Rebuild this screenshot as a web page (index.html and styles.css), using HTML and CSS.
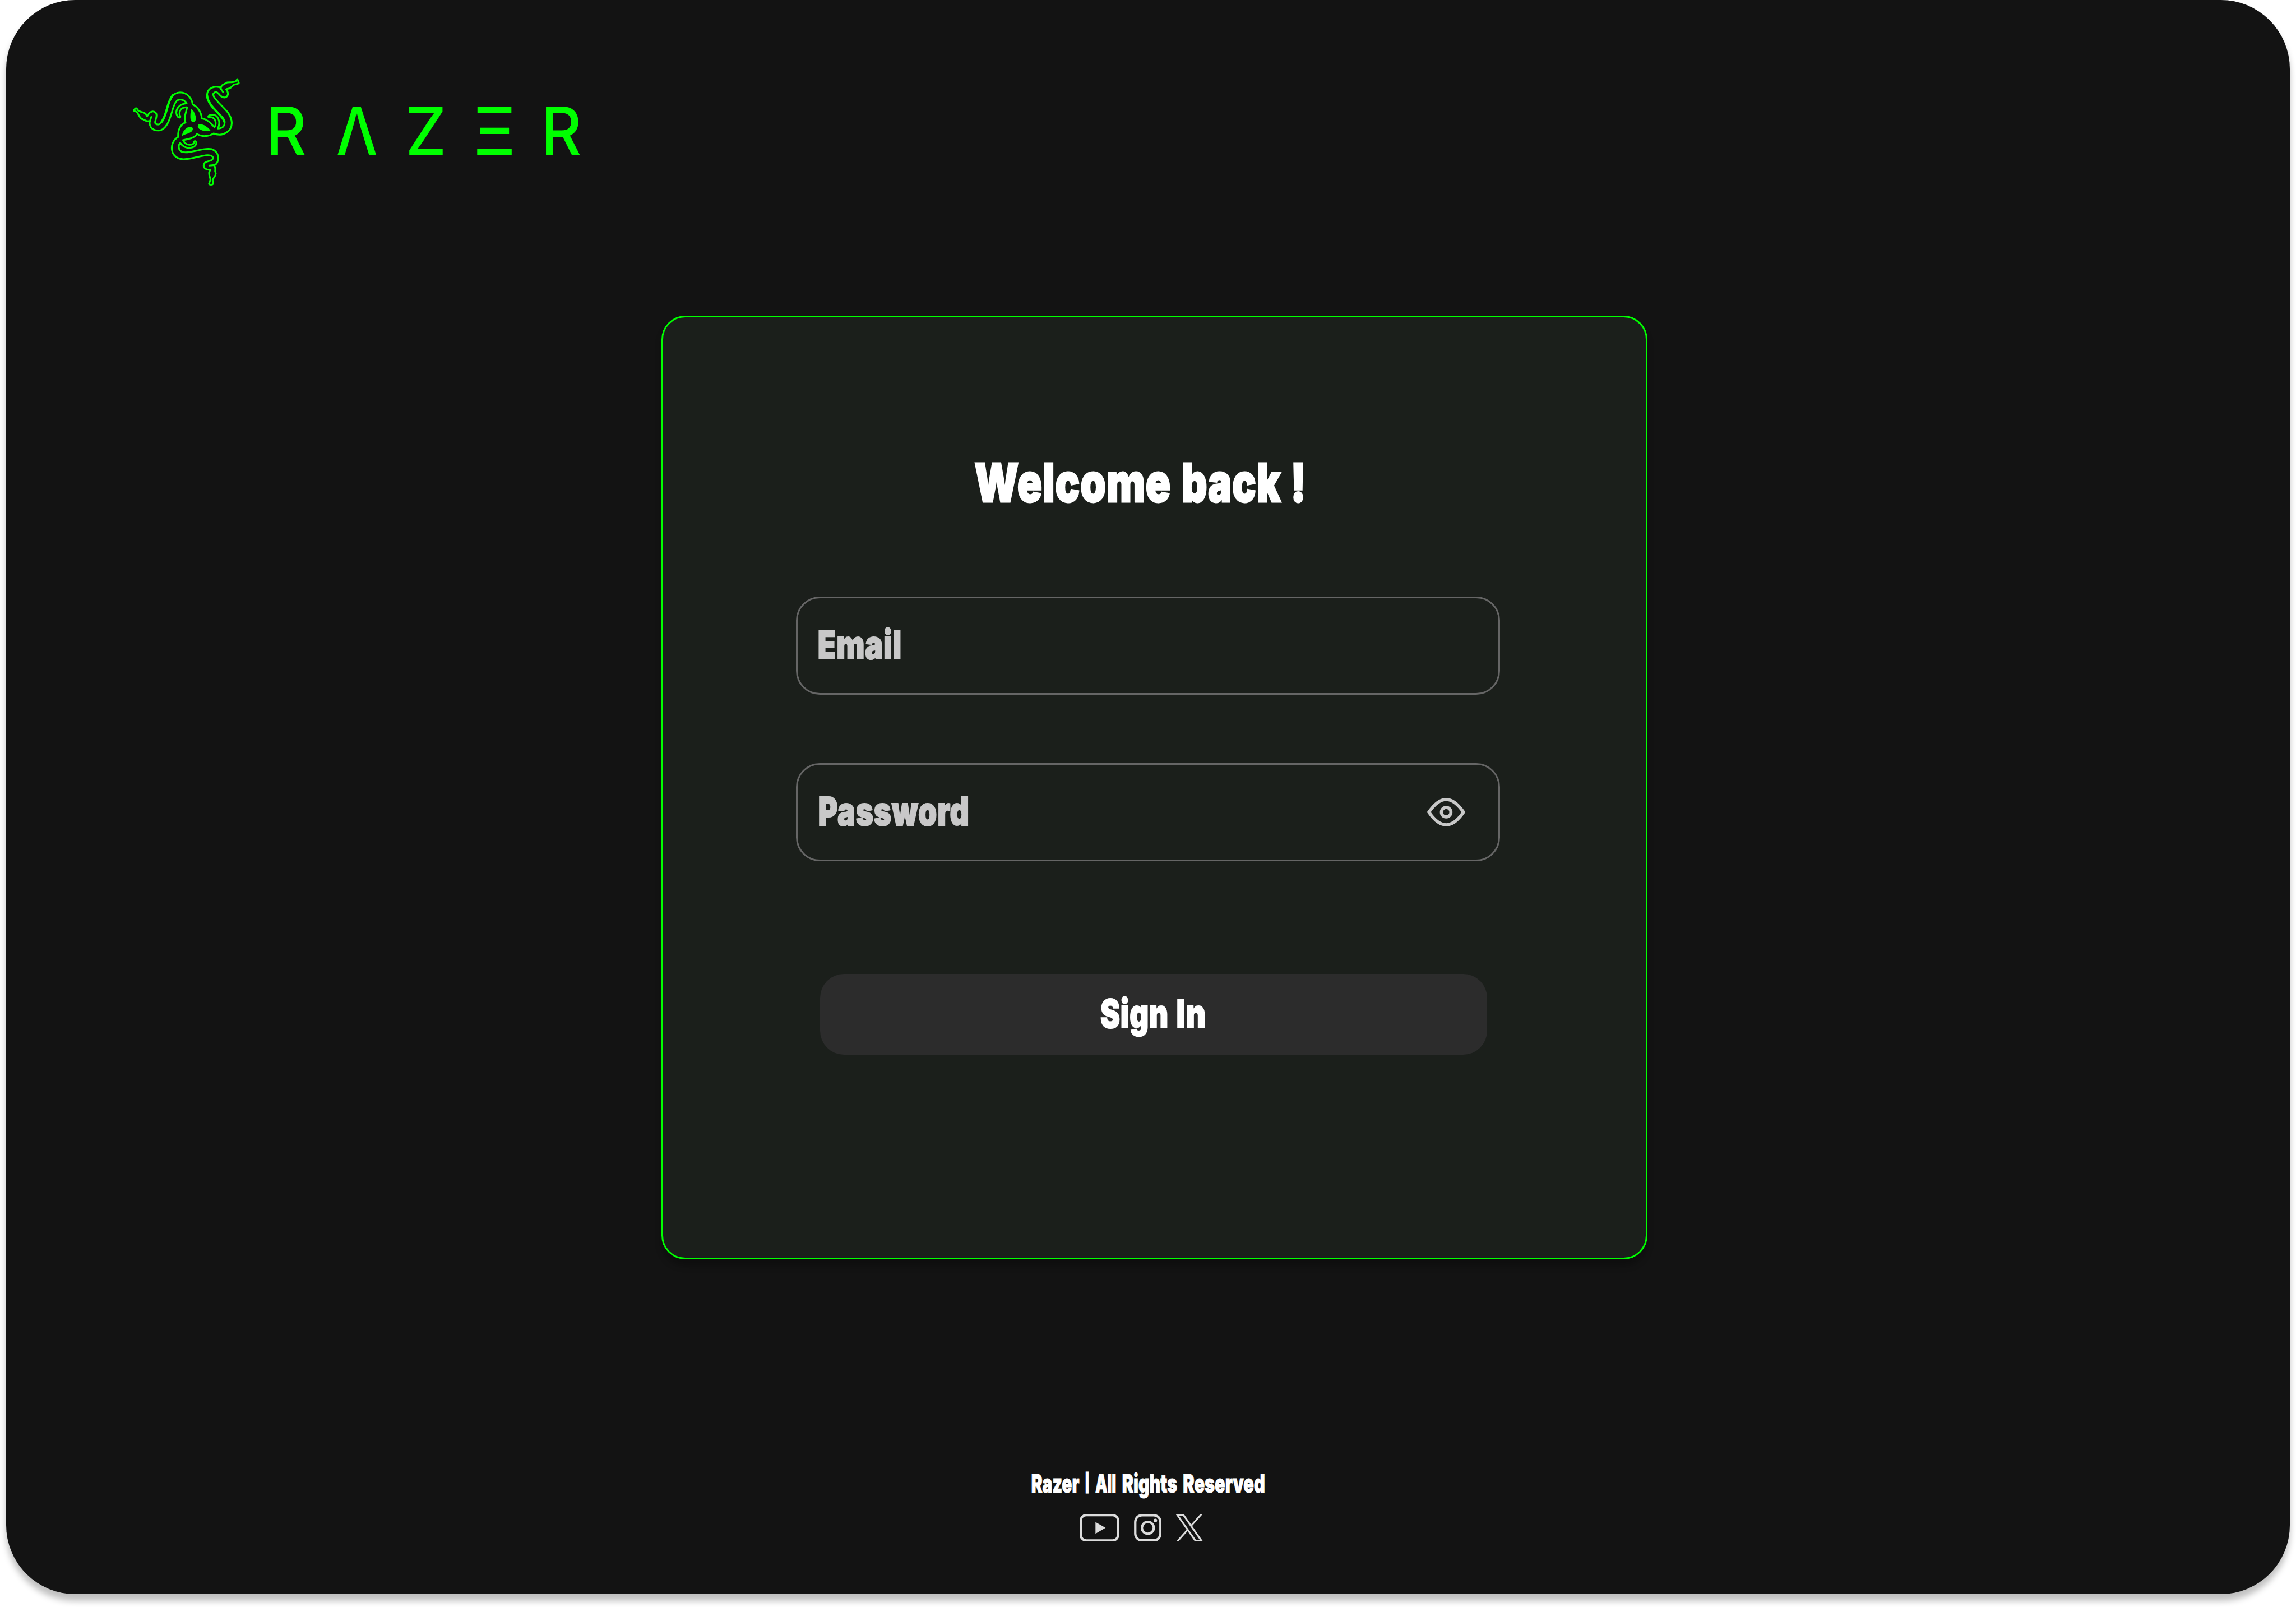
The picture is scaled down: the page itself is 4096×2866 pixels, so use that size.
FILE: index.html
```html
<!DOCTYPE html>
<html lang="en">
<head>
<meta charset="utf-8">
<title>Razer | Sign In</title>
<link rel="stylesheet" href="styles.css">
</head>
<body>
<main class="window">
  <header class="brand">
    <svg class="snakes" viewBox="0 0 960 930" aria-hidden="true">
      <g class="snake-line">
        <path d="M216 346L211 362C190 405 215 449 268 449C345 449 366 318 386 265C400 222 420 213 436 214C455 215 472 226 483 243C425 247 399 290 407 325C412 345 424 353 432 351C441 345 433 338 430 328C426 290 452 271 486 273C484 305 458 345 475 388C437 400 416 445 419 498C345 540 355 664 460 666C530 666 590 637 640 635C670 634 686 645 682 660C675 690 615 670 612 712C612 735 632 748 663 746L654 764C650 790 664 805 663 822L653 852C655 861 680 861 682 852L680 822C690 800 703 795 704 773L699 756C702 735 700 720 690 712C740 695 735 590 655 588C600 584 530 614 475 614C422 614 414 572 434 541C462 582 500 584 525 577C550 570 558 553 555 537C550 525 540 527 540 538C537 550 522 557 505 557C485 556 467 545 456 521C500 513 540 508 562 475C600 497 650 496 687 471C755 500 825 455 825 392C823 305 735 265 690 193C675 162 705 145 727 172C745 195 765 205 783 195C805 178 795 150 782 137C790 129 800 136 815 126L840 103L868 95C882 92 880 88 874 82C877 62 862 58 857 74C840 90 815 80 790 85C770 100 745 100 742 126C700 105 638 125 638 182C642 270 765 335 770 385C774 415 753 433 719 434C744 385 722 325 674 329C650 330 642 345 650 348C698 340 715 390 694 424C665 395 640 362 598 357C596 312 567 269 529 252C524 203 485 160 435 160C365 162 350 235 333 290C318 345 290 404 266 404C215 400 275 345 250 315C235 298 210 303 197 322C192 333 188 340 184 340L177 328C170 316 160 312 145 310L120 300C110 295 110 278 99 279C92 279 94 287 86 293C81 299 88 304 98 304L111 314C120 328 125 350 145 362C160 363 170 377 190 379L208 376"/>
        <path d="M741 123L743 135L759 157"/>
        <path d="M694 710L655 714"/>
        <path class="thick" d="M380 180C350 215 345 250 333 290C322 330 308 365 295 382"/>
        <path class="thick" d="M638 182C642 270 765 335 770 385"/>
      </g>
      <g class="snake-eye">
        <path d="M519 284C543 302 561 352 550 373C542 388 524 388 515 372C508 348 512 306 519 284Z"/>
        <path d="M448 490C453 444 492 412 523 423C535 431 531 447 520 457C501 473 470 476 448 490Z"/>
        <path d="M664 449C642 419 605 397 575 402C564 409 566 423 576 434C597 454 638 458 664 449Z"/>
      </g>
    </svg>
    <svg class="wordmark" viewBox="660 230 840 200" role="img" aria-label="Razer">
      <text y="391.7"><tspan x="670.3" textLength="102.9" lengthAdjust="spacingAndGlyphs">R</tspan><tspan x="847.2" textLength="105.2" lengthAdjust="spacingAndGlyphs">Λ</tspan><tspan x="1022.3" textLength="103.4" lengthAdjust="spacingAndGlyphs">Z</tspan><tspan x="1193" textLength="107.7" lengthAdjust="spacingAndGlyphs">Ξ</tspan><tspan x="1364.2" textLength="102.9" lengthAdjust="spacingAndGlyphs">R</tspan></text>
    </svg>
  </header>

  <section class="card">
    <h1 class="title">
      <svg viewBox="2440 1140 870 160"><text y="1266"><tspan x="2457.3" textLength="496" lengthAdjust="spacingAndGlyphs">Welcome</tspan><tspan x="2979.7" textLength="251.500" lengthAdjust="spacingAndGlyphs">back</tspan><tspan x="3254.6" textLength="40.9" lengthAdjust="spacingAndGlyphs">!</tspan></text></svg>
    </h1>
    <div class="field">
      <svg class="label" viewBox="2052 1564 460 128"><text x="2063" y="1662" textLength="212.5" lengthAdjust="spacingAndGlyphs">Email</text></svg>
    </div>
    <div class="field">
      <svg class="label" viewBox="2052 1984 460 128"><text x="2064" y="2082" textLength="382" lengthAdjust="spacingAndGlyphs">Password</text></svg>
      <svg class="eye" viewBox="0 0 96 72">
        <path d="M4.300 36C18 16 32 4 48 4S78 16 91.700 36C78 56 64 68 48 68S18 56 4.300 36Z"/>
        <circle cx="48" cy="36" r="12"/>
      </svg>
    </div>
    <button class="submit" type="button">
      <svg viewBox="2760 2500 300 120"><text y="2594"><tspan x="2775.5" textLength="172.500" lengthAdjust="spacingAndGlyphs">Sign</tspan><tspan x="2967.3" textLength="75.500" lengthAdjust="spacingAndGlyphs">In</tspan></text></svg>
    </button>
  </section>

  <footer class="footer">
    <svg class="rights" viewBox="2590 3700 612 80"><text y="3763"><tspan x="2601" textLength="121" lengthAdjust="spacingAndGlyphs">Razer</tspan><tspan class="bar" x="2735.2" y="3755" textLength="13.5" lengthAdjust="spacingAndGlyphs">|</tspan><tspan x="2762.4" y="3763" textLength="52.900" lengthAdjust="spacingAndGlyphs">All</tspan><tspan x="2830" textLength="139.1" lengthAdjust="spacingAndGlyphs">Rights</tspan><tspan x="2983.6" textLength="207" lengthAdjust="spacingAndGlyphs">Reserved</tspan></text></svg>
    <nav class="social">
      <svg class="youtube" viewBox="0 0 100 70"><rect x="2.900" y="2.900" width="94.200" height="64.200" rx="14"/><path class="solid" d="M40 20.500L65.500 35L40 50Z"/></svg>
      <svg class="square" viewBox="0 0 70 70"><rect x="3.200" y="3.200" width="63.600" height="63.600" rx="17"/><circle cx="35" cy="35" r="15"/><circle class="solid" cx="54" cy="16.500" r="4.400"/></svg>
      <svg class="square" viewBox="0 0 70 70"><path class="thin" d="M4.500 2.200H19.800L65.700 67.800H50.500Z M69.500 -4L39 30.500M31 39.500L0 74.500"/></svg>
    </nav>
  </footer>
</main>
</body>
</html>
```
FILE: styles.css
```css
:root {
  --u: calc(100vw / 5792);
  --green: #00ff00;
  --muted: #c8c8c8;
}

* { box-sizing: border-box; }

body {
  margin: 0;
  height: 100vh;
  overflow: hidden;
  background: #fff;
  font-family: Inter, "Liberation Sans", sans-serif;
}

svg { display: block; }

.window {
  display: flex;
  flex-direction: column;
  height: calc(var(--u) * 4020);
  margin: 0 calc(var(--u) * 16);
  border-radius: calc(var(--u) * 174);
  background: #131313;
  box-shadow: 0 calc(var(--u) * 16) calc(var(--u) * 16) rgba(0, 0, 0, .25);
}

.brand {
  display: flex;
  gap: calc(var(--u) * 30);
  height: calc(var(--u) * 490);
  padding: calc(var(--u) * 180) 0 0 calc(var(--u) * 294);
}

.snakes {
  width: calc(var(--u) * 320);
  height: calc(var(--u) * 310);
}

.snake-line {
  fill: none;
  stroke: var(--green);
  stroke-width: 13;
  stroke-linejoin: round;
  stroke-linecap: round;
}

.thick { stroke-width: 17; }

.snake-eye { fill: var(--green); }

.wordmark,
.title svg,
.label,
.submit svg,
.rights { overflow: visible; }

.wordmark {
  width: calc(var(--u) * 840);
  height: calc(var(--u) * 200);
  margin-top: calc(var(--u) * 50);
  fill: var(--green);
  font-size: 170px;
  font-weight: 480;
}

.card {
  display: flex;
  flex-direction: column;
  width: calc(var(--u) * 2488);
  height: calc(var(--u) * 2380);
  margin: calc(var(--u) * 306) 0 0 calc(var(--u) * 1652);
  padding: calc(var(--u) * 340) 0 0 calc(var(--u) * 336);
  border: 3px solid var(--green);
  border-radius: calc(var(--u) * 60);
  background: #1b1f1b;
  box-shadow: 0 calc(var(--u) * 16) calc(var(--u) * 16) rgba(0, 0, 0, .25);
}

.title {
  margin: 0 0 calc(var(--u) * 204) calc(var(--u) * 432);
  fill: #fff;
  stroke: #fff;
  stroke-width: 4px;
  font-size: 135px;
  font-weight: 900;
  letter-spacing: 1.5px;
}

.title svg {
  width: calc(var(--u) * 870);
  height: calc(var(--u) * 160);
}

.field {
  display: flex;
  align-items: center;
  justify-content: space-between;
  width: calc(var(--u) * 1776);
  height: calc(var(--u) * 248);
  margin-bottom: calc(var(--u) * 172);
  padding: 0 calc(var(--u) * 84) 0 calc(var(--u) * 40);
  border: 3px solid #666;
  border-radius: calc(var(--u) * 60);
}

.label {
  width: calc(var(--u) * 460);
  height: calc(var(--u) * 128);
  fill: var(--muted);
  stroke: var(--muted);
  stroke-width: 3px;
  font-size: 100px;
  font-weight: 900;
  letter-spacing: 1.5px;
}

.eye {
  width: calc(var(--u) * 96);
  height: calc(var(--u) * 72);
  fill: none;
  stroke: var(--muted);
  stroke-width: 8;
}

.submit {
  display: flex;
  align-items: center;
  width: calc(var(--u) * 1684);
  height: calc(var(--u) * 204);
  margin: calc(var(--u) * 112) 0 0 calc(var(--u) * 60);
  padding: 0 0 0 calc(var(--u) * 692);
  border: 0;
  border-radius: calc(var(--u) * 60);
  background: #2c2c2c;
  font-family: inherit;
  font-size: 100px;
  font-weight: 900;
  letter-spacing: 1.5px;
}

.submit svg {
  width: calc(var(--u) * 300);
  height: calc(var(--u) * 120);
  fill: #fff;
  stroke: #fff;
  stroke-width: 3px;
}

.footer {
  display: flex;
  flex-direction: column;
  gap: calc(var(--u) * 38);
  margin-top: calc(var(--u) * 524);
  padding-left: calc(var(--u) * 2574);
}

.rights {
  width: calc(var(--u) * 612);
  height: calc(var(--u) * 80);
  fill: #fff;
  stroke: #fff;
  stroke-width: 1.5px;
  font-size: 64px;
  font-weight: 900;
}

.bar { font-size: 45px; }

.social {
  display: flex;
  gap: calc(var(--u) * 36);
  padding-left: calc(var(--u) * 134);
  fill: none;
  stroke: #dcdcdc;
  stroke-width: 6;
}

.youtube {
  width: calc(var(--u) * 100);
  height: calc(var(--u) * 70);
}

.square {
  width: calc(var(--u) * 70);
  height: calc(var(--u) * 70);
}

.solid {
  fill: #dcdcdc;
  stroke: none;
}

.thin { stroke-width: 4.5; }
```
